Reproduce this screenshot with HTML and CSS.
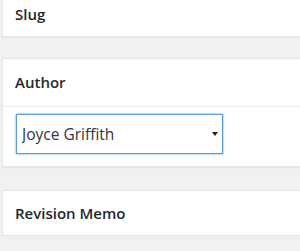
FILE: index.html
```html
<!DOCTYPE html>
<html lang="en">
<head>
    <meta charset="UTF-8">
    <meta name="viewport" content="width=device-width, initial-scale=1.0">
    <title>Post Boxes</title>
    <link rel="stylesheet" href="styles.css">
</head>
<body>
    <div class="sidebar">
        <div class="postbox postbox-slug">
            <h2 class="hndle">Slug</h2>
        </div>

        <div class="postbox">
            <h2 class="hndle hndle-open">Author</h2>
            <div class="inside">
                <div class="select-wrap">
                    <select class="author-select">
                        <option>Joyce Griffith</option>
                    </select>
                    <svg class="select-arrow" width="6" height="4" viewBox="0 0 6 4">
                        <path d="M0 0 L6 0 L3 4 Z" fill="#222"/>
                    </svg>
                </div>
            </div>
        </div>

        <div class="postbox">
            <h2 class="hndle">Revision Memo</h2>
        </div>
    </div>
</body>
</html>
```

FILE: styles.css
```css
* {
    margin: 0;
    padding: 0;
    box-sizing: border-box;
    font-family: 'Open Sans', sans-serif;
}

body {
    background-color: #f1f1f1;
    color: #23282d;
    overflow: hidden;
}

.sidebar {
    padding-left: 2px;
    margin-right: -4px;
    display: flex;
    flex-direction: column;
    gap: 21px;
}

.postbox-slug {
    margin-top: -9px;
}

.postbox {
    background-color: #ffffff;
    border: 1px solid #e5e5e5;
    box-shadow: 0 1px 1px rgba(0, 0, 0, 0.04);
}

.postbox + .postbox + .postbox {
    margin-top: 2px;
}

.hndle {
    font-size: 15px;
    font-weight: 600;
    line-height: 20px;
    padding: 12px 12px;
}

.hndle-open {
    padding: 13px 12px 14px;
    border-bottom: 1px solid #eeeeee;
}

.inside {
    padding: 7px 13px 12px;
}

.select-wrap {
    position: relative;
    width: 207px;
}

.author-select {
    appearance: none;
    -webkit-appearance: none;
    width: 100%;
    height: 40px;
    padding: 0 20px 0 5px;
    border: 1px solid #5b9dd9;
    border-radius: 0;
    box-shadow: 0 0 2px rgba(30, 140, 190, 0.8);
    background-color: #ffffff;
    color: #32373c;
    font-size: 15.5px;
    outline: none;
}

.select-arrow {
    position: absolute;
    right: 5px;
    top: 18px;
}
```
